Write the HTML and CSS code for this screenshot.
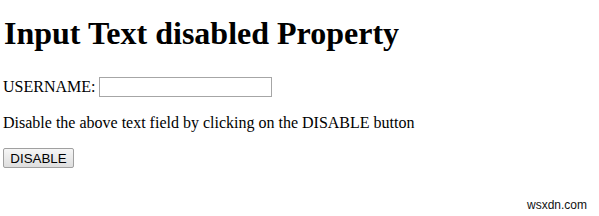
FILE: index.html
```html
<!DOCTYPE html>
<html>
<head>
<meta charset="utf-8">
<link rel="stylesheet" href="styles.css">
</head>
<body>
<div class="page">
  <h1 class="title">Input Text disabled Property</h1>
  <p class="row user">USERNAME:<input type="text" class="field"></p>
  <p class="row note">Disable the above text field by clicking on the DISABLE button</p>
  <button class="btn">DISABLE</button>
</div>
<div class="mark">wsxdn.com</div>
</body>
</html>
```
FILE: styles.css
```css
html, body { margin: 0; padding: 0; background: #fff; }
body { font-family: "Liberation Serif", "Times New Roman", serif; font-size: 16px; color: #000; width: 599px; height: 216px; position: relative; overflow: hidden; }
.page { padding: 15px 3px 0 3px; }
.title { font-size: 32px; font-weight: bold; margin: 0; line-height: 37px; padding-left: 1px; }
.row { margin: 0; line-height: 18px; }
.user { display: flex; align-items: center; gap: 4px; height: 20px; margin-top: 25px; }
.note { margin-top: 17px; }
.field { box-sizing: border-box; width: 173px; height: 20px; padding: 1px 2px; border: 1px solid #a6a6a6; font-size: 13px; margin: 0; background: #fff; }
.btn { display: block; box-sizing: border-box; width: 71px; height: 20px; margin: 16px 0 0 0; font-family: "Liberation Sans", Arial, sans-serif; font-size: 13.33px; padding: 0; border: 1px solid #a0a0a0; border-radius: 2px; background: linear-gradient(#f6f6f6, #dedede); color: #000; }
.mark { position: absolute; right: 12px; bottom: 4px; font-family: "Liberation Sans", Arial, sans-serif; font-size: 12px; color: #111; }
```
